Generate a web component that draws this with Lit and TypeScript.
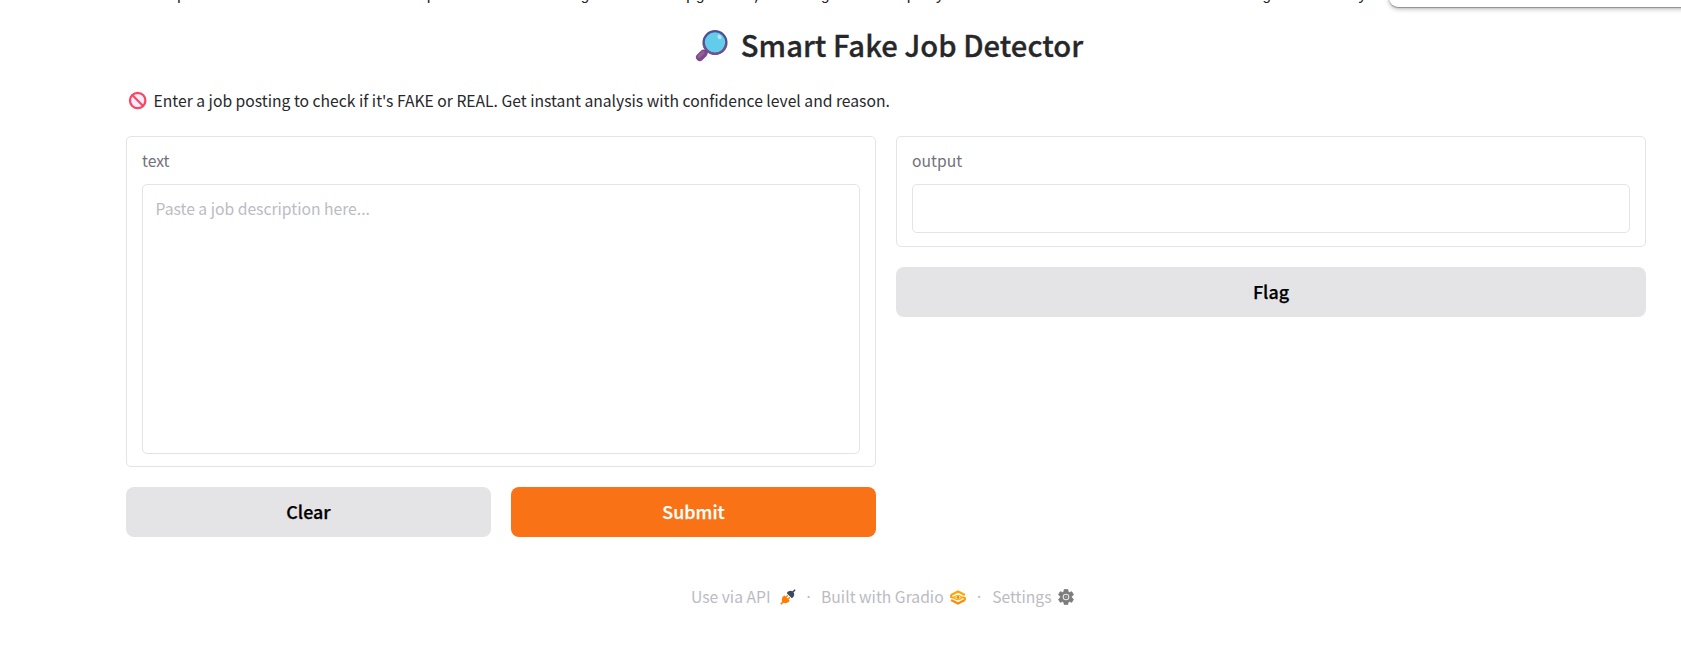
import { LitElement, html, css } from "lit";
import { customElement } from "lit/decorators.js";

@customElement("app-root")
export class AppRoot extends LitElement {
  static styles = css`
    :host {
      display: block;
      position: relative;
      height: 647px;
      overflow: hidden;
      background: #fff;
      color: #27272a;
      font-family: "Noto Sans CJK SC", "Noto Sans", sans-serif;
      font-size: 15.68px;
    }
    * { box-sizing: border-box; }
    .notice {
      height: 16px;
      overflow: hidden;
      display: flex;
      align-items: flex-end;
      padding: 0 0 8px 4px;
      white-space: nowrap;
      font: 16px/24px "Liberation Mono", monospace;
      color: #212121;
    }
    .popup {
      position: absolute;
      top: -20px;
      left: 1389px;
      width: 320px;
      height: 27px;
      border-radius: 9px;
      background: #fff;
      box-shadow: 0 1px 1px rgba(0, 0, 0, 0.3), 0 2px 5px rgba(0, 0, 0, 0.28);
    }
    .page { padding: 0 35px 0 126px; }
    h1 {
      margin: 0;
      height: 60px;
      display: flex;
      justify-content: center;
      align-items: center;
      gap: 12px;
      font-size: 29.2px;
      line-height: 56px;
      font-weight: 500;
      padding: 0 0 4px 6px;
      -webkit-text-stroke: 0.3px currentColor;
    }
    h1 svg { -webkit-text-stroke: 0; margin-top: 3px; }
    .intro {
      margin: 0;
      height: 60px;
      padding: 0 0 10px 2px;
      display: flex;
      align-items: center;
      gap: 6.5px;
      line-height: 50px;
    }
    .intro svg { margin-bottom: 1px; }
    .columns { display: flex; gap: 20px; align-items: flex-start; }
    .column { flex: 1; display: flex; flex-direction: column; gap: 20px; }
    .panel {
      border: 1px solid #e4e4e7;
      border-radius: 5px;
      padding: 15px 15px 12px;
    }
    .short { padding-bottom: 13px; }
    .label { display: block; line-height: 18px; height: 32px; color: #71717a; }
    .field {
      border: 1px solid #e4e4e7;
      border-radius: 5px;
      height: 49px;
      padding: 12px 12.5px;
      line-height: 24px;
      color: #bbbbc2;
    }
    .tall { height: 270px; }
    .row { display: flex; gap: 20px; }
    button {
      flex: 1;
      height: 50px;
      min-height: 50px;
      padding: 0 0 2px;
      border: 0;
      border-radius: 8px;
      background: #e4e4e7;
      color: #000;
      font-family: inherit;
      font-size: 17.9px;
      font-weight: 500;
      line-height: 48px;
      -webkit-text-stroke: 0.25px currentColor;
    }
    .primary { background: #f97316; color: #fff; }
    footer {
      display: flex;
      justify-content: center;
      align-items: center;
      height: 30px;
      margin-top: 45px;
      color: #bbbbc2;
      line-height: 30px;
      padding-right: 7px;
    }
    footer svg { display: block; }
    .item { display: flex; align-items: center; gap: 6.5px; }
    .api { gap: 9.5px; }
    .dot { width: 26px; text-align: center; font-family: "Noto Sans", sans-serif; }
    .api + .dot { width: 25px; }
    svg { flex: none; }
  `;

  render() {
    return html`
      <div class="notice"><span>This share link expires in 1 week. For free permanent hosting and GPU upgrades, run \`gradio deploy\` from the terminal in the working directory</span></div>
      <div class="popup"></div>
      <div class="page">
        <h1>
          <svg width="34" height="34" viewBox="0 0 34 34">
            <path d="M9 24.5 L12.5 21" stroke="#6a3f7c" stroke-width="4"/>
            <path d="M4.8 28.3 L8.6 24.5" stroke="#7f4a8a" stroke-width="7.6" stroke-linecap="round"/>
            <path d="M4 27.5 L8 23.6" stroke="#95609c" stroke-width="3" stroke-linecap="round"/>
            <circle cx="20" cy="13.5" r="11.4" fill="#62cdea" stroke="#4f4f94" stroke-width="2.3"/>
            <path d="M8.7 15 A11.4 11.4 0 0 0 31.2 15.5" fill="none" stroke="#75508f" stroke-width="2.3"/>
            <ellipse cx="24.5" cy="8" rx="1.9" ry="2.4" fill="#b4e6fa" transform="rotate(-35 24.5 8)"/>
          </svg>
          <span>Smart Fake Job Detector</span>
        </h1>
        <p class="intro">
          <svg width="19" height="19" viewBox="0 0 19 19">
            <circle cx="9.7" cy="9.5" r="7.7" fill="#f3eefb" stroke="#fb4763" stroke-width="2.3"/>
            <path d="M4.3 4.1 L15.1 14.9" stroke="#fb4763" stroke-width="2.1"/>
          </svg>
          <span>Enter a job posting to check if it's FAKE or REAL. Get instant analysis with confidence level and reason.</span>
        </p>
        <div class="columns">
          <div class="column">
            <div class="panel">
              <span class="label">text</span>
              <div class="field tall">Paste a job description here...</div>
            </div>
            <div class="row">
              <button>Clear</button>
              <button class="primary">Submit</button>
            </div>
          </div>
          <div class="column">
            <div class="panel short">
              <span class="label">output</span>
              <div class="field"></div>
            </div>
            <button>Flag</button>
          </div>
        </div>
        <footer>
          <span class="item api">Use via API
            <svg width="16" height="16" viewBox="0 0 17 17">
              <path d="M1 16 L4 13" stroke="#ff7c00" stroke-width="1.8"/>
              <path d="M4.8 6.8 L10.2 12.2 C8.8 15.2 5 15.8 2.8 14.2 C1.2 12 1.8 8.2 4.8 6.8Z" fill="#ff7c00"/>
              <path d="M6 9 L8.4 6.6 M8.2 11.2 L10.6 8.8" stroke="#ff7c00" stroke-width="1.3"/>
              <path d="M7.2 4.4 L12.6 9.8 C15.2 8.4 15.8 5 14.4 3.6 L16.6 1.2 L15.6 .3 L13.2 2.4 C11.8 1.2 8.6 1.8 7.2 4.4Z" fill="#3c4963"/>
            </svg>
          </span>
          <span class="dot">·</span>
          <span class="item">Built with Gradio
            <svg width="16" height="15" viewBox="0 0 16 15">
              <path d="M1.1 5 L8 1.4 L14.9 5" fill="none" stroke="#ffa60a" stroke-width="2.3" stroke-linejoin="round"/>
              <path d="M1.1 10 L8 13.6 L14.9 10" fill="none" stroke="#ff8c05" stroke-width="2.3" stroke-linejoin="round"/>
              <path d="M1 4.8 V7 L4 7.8 M15 10.2 V8 L12 7.2" fill="none" stroke="#ff9a08" stroke-width="1.8"/>
              <path d="M2.6 7.5 Q8 1.9 13.4 7.5 Q8 13.1 2.6 7.5Z" fill="#ffae0c"/>
              <ellipse cx="8" cy="7.5" rx="2.7" ry="1.8" fill="#fff1cf"/>
              <circle cx="8" cy="7.5" r="1.4" fill="#ff8200"/>
            </svg>
          </span>
          <span class="dot">·</span>
          <span class="item">Settings
            <svg width="16" height="16" viewBox="2 2 20 20">
              <path fill="#7d7d7d" stroke="#7d7d7d" stroke-width=".8" d="M19.14 12.94c.04-.3.06-.61.06-.94 0-.32-.02-.64-.07-.94l2.03-1.58c.18-.14.23-.41.12-.61l-1.92-3.32c-.12-.22-.37-.29-.59-.22l-2.39.96c-.5-.38-1.03-.7-1.62-.94l-.36-2.54c-.04-.24-.24-.41-.48-.41h-3.84c-.24 0-.43.17-.47.41l-.36 2.54c-.59.24-1.13.57-1.62.94l-2.39-.96c-.22-.08-.47 0-.59.22L2.74 8.87c-.12.21-.08.47.12.61l2.03 1.58c-.05.3-.09.63-.09.94s.02.64.07.94l-2.03 1.58c-.18.14-.23.41-.12.61l1.92 3.32c.12.22.37.29.59.22l2.39-.96c.5.38 1.03.7 1.62.94l.36 2.54c.05.24.24.41.48.41h3.84c.24 0 .44-.17.47-.41l.36-2.54c.59-.24 1.13-.56 1.62-.94l2.39.96c.22.08.47 0 .59-.22l1.92-3.32c.12-.22.07-.47-.12-.61l-2.01-1.58z"/>
              <circle cx="12" cy="12" r="3.5" fill="none" stroke="#e8e8e8" stroke-width="1.3"/>
              <circle cx="12" cy="12" r="1" fill="#b5b5b5"/>
            </svg>
          </span>
        </footer>
      </div>
    `;
  }
}
